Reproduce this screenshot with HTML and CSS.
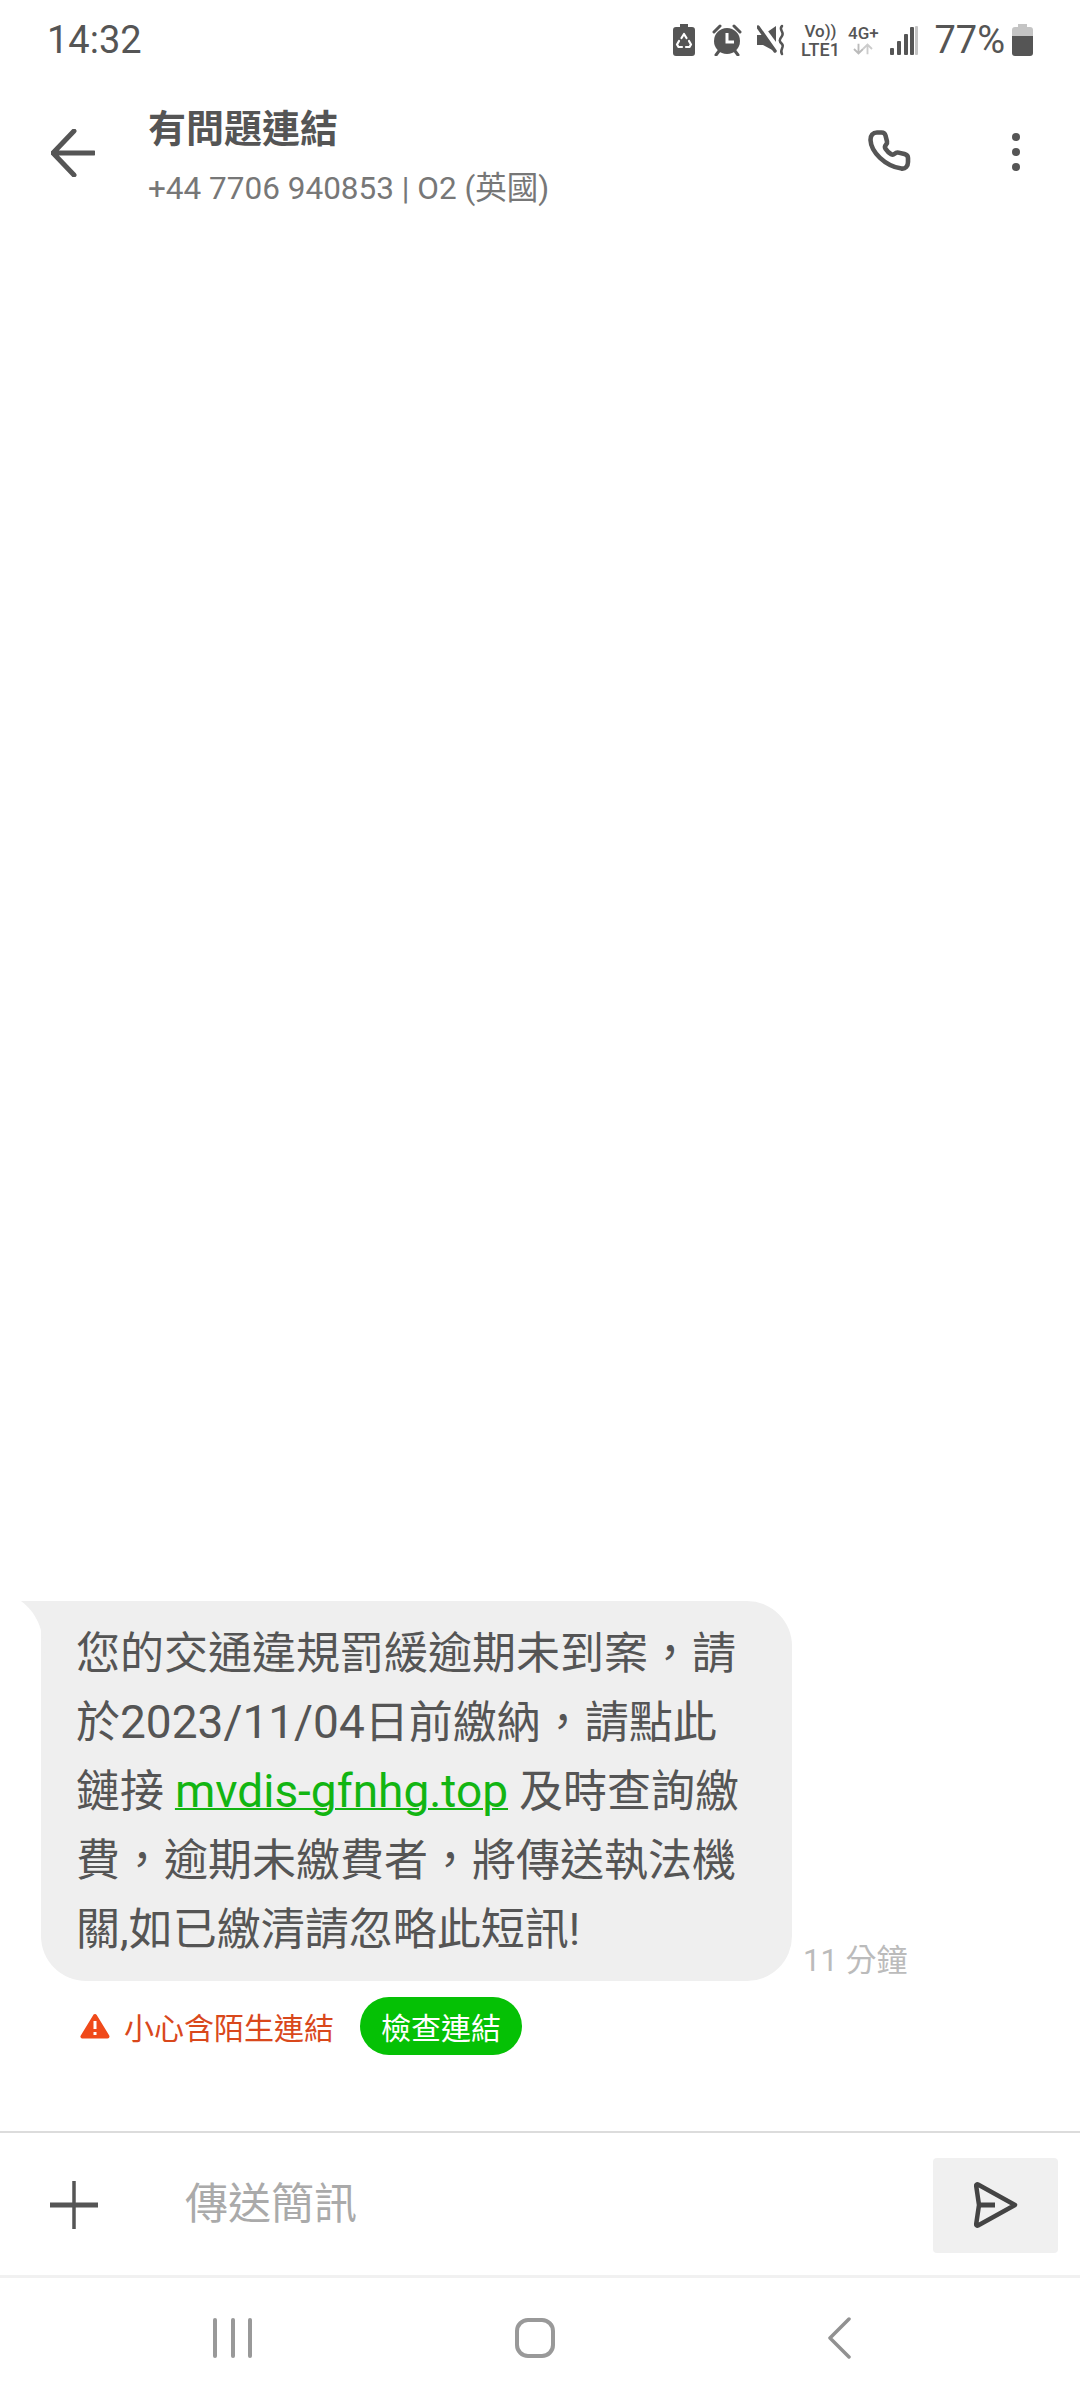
FILE: index.html
```html
<!DOCTYPE html>
<html lang="zh-Hant">
<head>
<meta charset="utf-8">
<title>有問題連結</title>
<link rel="stylesheet" href="styles.css">
</head>
<body>
<div class="screen">
  <div class="status">
    <span class="time">14:32</span>
    <svg class="st st-saver" viewBox="0 0 22 32"><path fill="#555" d="M7 0h8v3h4a3 3 0 0 1 3 3v23a3 3 0 0 1-3 3H3a3 3 0 0 1-3-3V6a3 3 0 0 1 3-3h4z"/><g fill="none" stroke="#fff" stroke-width="2.2" stroke-linecap="round" stroke-linejoin="round"><path d="M8.5 14l2.500-4 2.500 4"/><path d="M16 17l2 3.500-1.500 2.500H13"/><path d="M9 23H5.500L4 20.500 6 17"/></g></svg>
    <svg class="st st-alarm" viewBox="0 0 30 32"><circle cx="15" cy="17" r="13" fill="#555"/><path d="M2 8l6-6M28 8l-6-6M7 27l-3 4M23 27l3 4" stroke="#555" stroke-width="3" stroke-linecap="round"/><path d="M15 9v9h7" fill="none" stroke="#fff" stroke-width="3"/></svg>
    <svg class="st st-mute" viewBox="0 0 29 32"><path fill="#555" d="M0 11h6L19 2v26L6 21H0z"/><path d="M2 0l20 27" stroke="#fff" stroke-width="6"/><path d="M1 3l17 24" stroke="#555" stroke-width="3.500" stroke-linecap="round"/><path d="M25 2c-4 4 3 6 0 10s-3 5 0 8-3 6 0 10" fill="none" stroke="#555" stroke-width="2.500" stroke-linecap="round"/></svg>
    <span class="st-volte"><span class="vo">Vo))</span><span class="lte">LTE1</span></span>
    <span class="st-net"><span class="g4">4G+</span>
      <svg class="arrows" viewBox="0 0 32 14"><path d="M10 0v13M4 7l6 6 6-6" fill="none" stroke="#bbb" stroke-width="2.500"/><path d="M22 14V1M16 7l6-6 6 6" fill="none" stroke="#ccc" stroke-width="2.500"/></svg>
    </span>
    <svg class="st st-signal" viewBox="0 0 28 32"><g fill="#555"><rect x="0" y="24" width="4" height="7" rx="1"/><rect x="7" y="17" width="4" height="14" rx="1"/><rect x="14" y="10" width="4" height="21" rx="1"/><rect x="20" y="3" width="4" height="28" rx="1"/></g><rect x="25" y="2" width="3" height="29" rx="1" fill="#c4c4c4"/></svg>
    <span class="pct">77%</span>
    <svg class="st st-batt" viewBox="0 0 21 32"><path fill="#c4c4c4" d="M6 0h9v3h3a3 3 0 0 1 3 3v8H0V6a3 3 0 0 1 3-3h3z"/><path fill="#555" d="M0 12h21v17a3 3 0 0 1-3 3H3a3 3 0 0 1-3-3z"/></svg>
  </div>

  <header class="head">
    <svg class="back" viewBox="0 0 44 48"><path d="M23 2L2 24l21 22M2 24h41" fill="none" stroke="#555" stroke-width="5" stroke-linecap="round" stroke-linejoin="round"/></svg>
    <div class="who">
      <div class="name">有問題連結</div>
      <div class="num">+44 7706 940853 | O2 (英國)</div>
    </div>
    <svg class="phone" viewBox="0 0 44 44"><path d="M9 2.500h4.500c2 0 3.500 1 4 3l1.500 6c.4 1.500-.2 2.500-1.200 3.500-1 1.200-1.200 2.300-.3 3.700 1.500 2.300 3.300 4.100 5.700 5.500 1.200.7 2.300.6 3.300-.3 1.200-1.100 2.500-1.700 4-1.300l6 1.500c2 .5 3.500 2 3.500 4v4c0 4-2.500 7-6.500 6.500C17 36 3 22 2.500 10 2.300 5.500 5 2.500 9 2.500z" fill="none" stroke="#555" stroke-width="4.600" stroke-linejoin="round"/></svg>
    <div class="dots"><i></i><i></i><i></i></div>
  </header>

  <main class="thread">
    <div class="msg-row">
      <div class="bubble">
        <svg class="tail" viewBox="0 0 24 52"><path fill="#efefef" d="M0 0h24v52C22 28 16 12 0 0z"/></svg>
        <p class="text">您的交通違規罰緩逾期未到案，請<br>於<span class="latin">2023/11/04</span>日前繳納，請點此<br>鏈接 <a class="link" href="#">mvdis-gfnhg.top</a> 及時查詢繳<br>費，逾期未繳費者，將傳送執法機<br>關,如已繳清請忽略此短訊!</p>
      </div>
      <span class="when">11 分鐘</span>
    </div>
    <div class="warn-row">
      <svg class="warn-icon" viewBox="0 0 30 26"><path fill="#f04a1a" stroke="#f04a1a" stroke-width="4" stroke-linejoin="round" d="M15 3L2.500 23.500h25z"/><path d="M15 8v8M15 19v3" stroke="#fff" stroke-width="3"/></svg>
      <span class="warn-text">小心含陌生連結</span>
      <span class="check">檢查連結</span>
    </div>
  </main>

  <div class="composer">
    <svg class="plus" viewBox="0 0 48 48"><path d="M24 0v48" stroke="#555" stroke-width="3.500"/><path d="M0 24h48" stroke="#555" stroke-width="5"/></svg>
    <span class="placeholder">傳送簡訊</span>
    <div class="send">
      <svg class="send-icon" viewBox="0 0 44 48"><path d="M4 3.500L41 24 4 44.500c-1 .5-2-.5-1.800-1.500L5 24 2.200 5c-.2-1 .8-2 1.800-1.500z" fill="none" stroke="#444" stroke-width="4.500" stroke-linejoin="round"/><path d="M5 24h16" stroke="#444" stroke-width="5"/></svg>
    </div>
  </div>

  <nav class="nav">
    <div class="recents"><i></i><i></i><i></i></div>
    <div class="home"></div>
    <svg class="nav-back" viewBox="0 0 24 42"><path d="M22 2L3 21l19 19" fill="none" stroke="#919191" stroke-width="3.500" stroke-linecap="round" stroke-linejoin="round"/></svg>
  </nav>
</div>
</body>
</html>
```

FILE: styles.css
```css
* { box-sizing: border-box; }
html, body { margin: 0; padding: 0; background: #fff; }
body { font-family: Roboto, "Noto Sans CJK TC", sans-serif; color: #555; }
.screen { width: 1080px; height: 2400px; display: flex; flex-direction: column; overflow: hidden; }

.status { height: 80px; flex: none; display: flex; align-items: center; padding: 0 47px 0 47px; }
.time { font-size: 38px; color: #555; line-height: 1; }
.st { display: block; height: 32px; flex: none; }
.st-saver { width: 22px; margin-left: auto; }
.st-alarm { width: 30px; margin-left: 17px; }
.st-mute { width: 29px; margin-left: 15px; }
.st-volte { width: 42px; margin-left: 13px; display: flex; flex-direction: column; align-items: center; gap: 1px; font-weight: 500; color: #555; }
.vo { font-size: 17px; line-height: 17px; }
.lte { font-size: 18px; line-height: 17px; }
.st-net { width: 32px; margin-left: 6px; display: flex; flex-direction: column; align-items: center; }
.g4 { font-size: 17px; line-height: 18px; font-weight: 500; color: #555; }
.arrows { width: 24px; height: 14px; display: block; }
.st-signal { width: 28px; margin-left: 11px; }
.pct { margin-left: 16px; font-size: 38px; line-height: 1; color: #555; }
.st-batt { width: 21px; margin-left: 7px; }

.head { flex: none; height: 134px; display: flex; align-items: flex-start; padding: 24px 0 0 51px; }
.back { width: 44px; height: 48px; margin-top: 25px; flex: none; }
.who { margin-left: 53px; }
.name { font-size: 38px; line-height: 50px; font-weight: 700; color: #555; }
.num { font-size: 31.500px; line-height: 44px; margin-top: 13px; color: #777; }
.phone { width: 44px; height: 44px; margin-top: 26px; margin-left: auto; flex: none; }
.dots { width: 8px; margin: 29px 60px 0 100px; display: flex; flex-direction: column; gap: 7px; flex: none; }
.dots i { display: block; width: 8px; height: 8px; border-radius: 50%; background: #555; }

.thread { flex: 1; display: flex; flex-direction: column; justify-content: flex-end; padding-bottom: 76px; }
.msg-row { display: flex; align-items: flex-end; padding-left: 41px; }
.bubble { position: relative; width: 751px; height: 380px; background: #efefef; border-radius: 0 45px 45px 45px; padding: 19px 0 0 35px; }
.tail { position: absolute; left: -20px; top: 0; width: 24px; height: 52px; }
.text { margin: 0; font-size: 44px; line-height: 69px; color: #555; white-space: nowrap; }
.latin { font-size: 46px; line-height: 1; }
.link { color: #12b512; font-size: 46px; line-height: 1; text-decoration: underline; text-decoration-thickness: 2px; }
.when { margin: 0 0 0 11px; font-size: 31px; line-height: 40px; color: #bbb; white-space: nowrap; }
.warn-row { display: flex; align-items: center; padding-left: 80px; margin-top: 16px; height: 58px; }
.warn-icon { width: 30px; height: 26px; flex: none; }
.warn-text { margin-left: 14px; font-size: 30px; color: #d9481c; }
.check { margin-left: 26px; width: 162px; height: 58px; border-radius: 29px; background: #05c105; color: #fff; font-size: 30px; display: flex; align-items: center; justify-content: center; }

.composer { flex: none; height: 147px; border-top: 2px solid #dcdcdc; border-bottom: 3px solid #f1f1f1; display: flex; align-items: center; padding: 0 22px 0 50px; }
.plus { width: 48px; height: 48px; flex: none; margin-top: 2px; }
.placeholder { margin-left: 87px; font-size: 43px; color: #aaa; margin-top: -8px; }
.send { margin-left: auto; width: 125px; height: 95px; background: #f0f0f0; border-radius: 4px; display: flex; align-items: center; justify-content: center; margin-top: 2px; }
.send-icon { width: 44px; height: 48px; }

.nav { flex: none; height: 122px; display: flex; align-items: flex-start; padding: 40px 0 0 213px; }
.recents { width: 39px; height: 40px; display: flex; justify-content: space-between; flex: none; }
.recents i { display: block; width: 4px; height: 40px; background: #999; border-radius: 2px; }
.home { margin-left: 263px; width: 40px; height: 40px; border: 4px solid #999; border-radius: 13px; flex: none; }
.nav-back { margin-left: 272px; width: 24px; height: 42px; margin-top: -1px; flex: none; }
```
